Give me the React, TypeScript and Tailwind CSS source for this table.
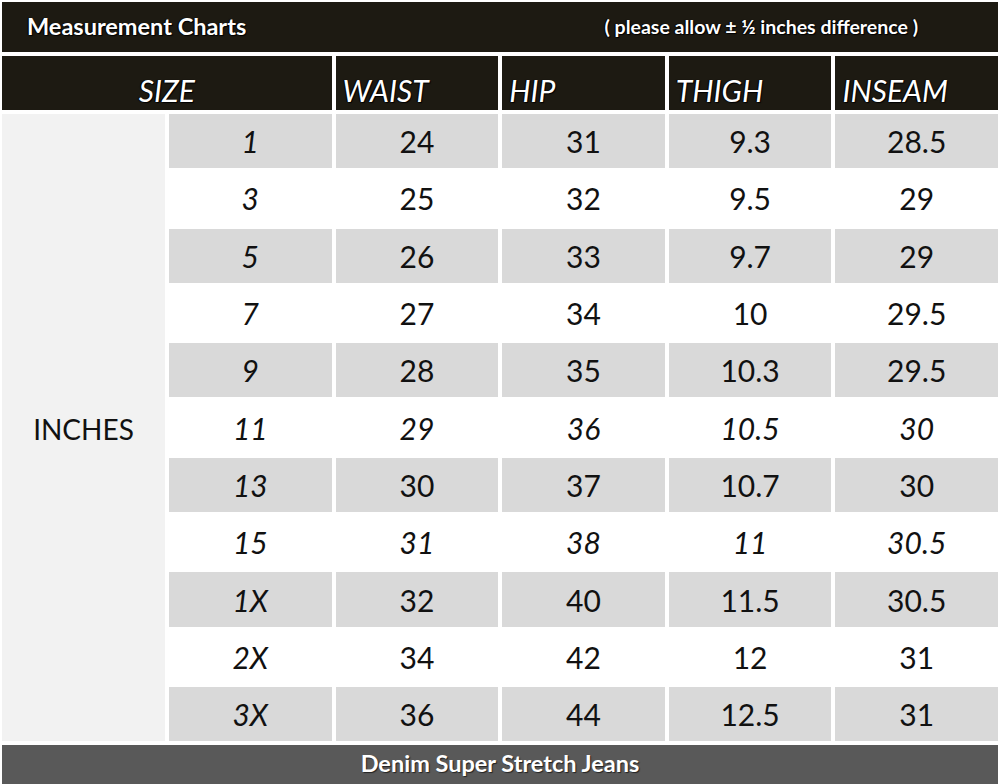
import React from 'react'

type Row = {
	size: string
	values: string[]
	italic?: boolean
}

const ROWS: Row[] = [
	{ size: '1', values: ['24', '31', '9.3', '28.5'] },
	{ size: '3', values: ['25', '32', '9.5', '29'] },
	{ size: '5', values: ['26', '33', '9.7', '29'] },
	{ size: '7', values: ['27', '34', '10', '29.5'] },
	{ size: '9', values: ['28', '35', '10.3', '29.5'] },
	{ size: '11', values: ['29', '36', '10.5', '30'], italic: true },
	{ size: '13', values: ['30', '37', '10.7', '30'] },
	{ size: '15', values: ['31', '38', '11', '30.5'], italic: true },
	{ size: '1X', values: ['32', '40', '11.5', '30.5'] },
	{ size: '2X', values: ['34', '42', '12', '31'] },
	{ size: '3X', values: ['36', '44', '12.5', '31'] }
]

const HEADERS = ['WAIST', 'HIP', 'THIGH', 'INSEAM']

const shadow = '[text-shadow:1px_1px_1px_#000,-1px_0_1px_#000]'

export default function App() {
	return (
		<div className="flex h-[784px] w-[1000px] flex-col gap-[4px] overflow-hidden bg-white px-[2px] pt-[2px] font-['Lato',sans-serif] text-[#111]">
			<div className="flex h-[50px] shrink-0 items-center bg-[#1d1a12] pl-[25px] pr-[80px]">
				<span className={`text-[23.5px] font-bold text-white ${shadow}`}>
					Measurement Charts
				</span>
				<span className={`ml-auto text-[19.5px] font-bold text-white ${shadow}`}>
					( please allow ± ½ inches difference )
				</span>
			</div>

			<div className="grid h-[54px] shrink-0 grid-cols-[163px_repeat(5,1fr)] gap-x-[4px]">
				<div className={`col-span-2 flex items-end justify-center bg-[#1d1a12] pb-[5px] text-[30px] italic leading-none text-white ${shadow}`}>
					SIZE
				</div>
				{HEADERS.map((h) => (
					<div
						key={h}
						className={`flex items-end bg-[#1d1a12] pb-[5px] pl-[7px] text-[30px] italic leading-none text-white ${shadow}`}
					>
						{h}
					</div>
				))}
			</div>

			<div className="grid shrink-0 grid-cols-[163px_repeat(5,1fr)] grid-rows-[repeat(11,54.3px)] gap-x-[4px] gap-y-[3px]">
				<div className="row-span-11 flex items-center justify-center bg-[#f2f2f2] pt-[2px] text-[28px] text-[#111]">
					INCHES
				</div>
				{ROWS.map((row, i) => {
					const tone = i % 2 === 0 ? 'bg-[#d9d9d9]' : 'bg-white'
					return (
						<React.Fragment key={row.size}>
							<div
								className={`col-start-2 flex items-center justify-center text-[30px] italic leading-none ${tone}`}
							>
								{row.size}
							</div>
							{row.values.map((v, j) => (
								<div
									key={j}
									className={`flex items-center justify-center text-[30px] leading-none ${tone} ${row.italic ? 'italic' : ''}`}
								>
									{v}
								</div>
							))}
						</React.Fragment>
					)
				})}
			</div>

			<div className="flex flex-1 items-center justify-center bg-[#595959] pb-[2px] text-[23.5px] font-bold text-white [text-shadow:1px_1px_1px_#222]">
				Denim Super Stretch Jeans
			</div>
		</div>
	)
}
